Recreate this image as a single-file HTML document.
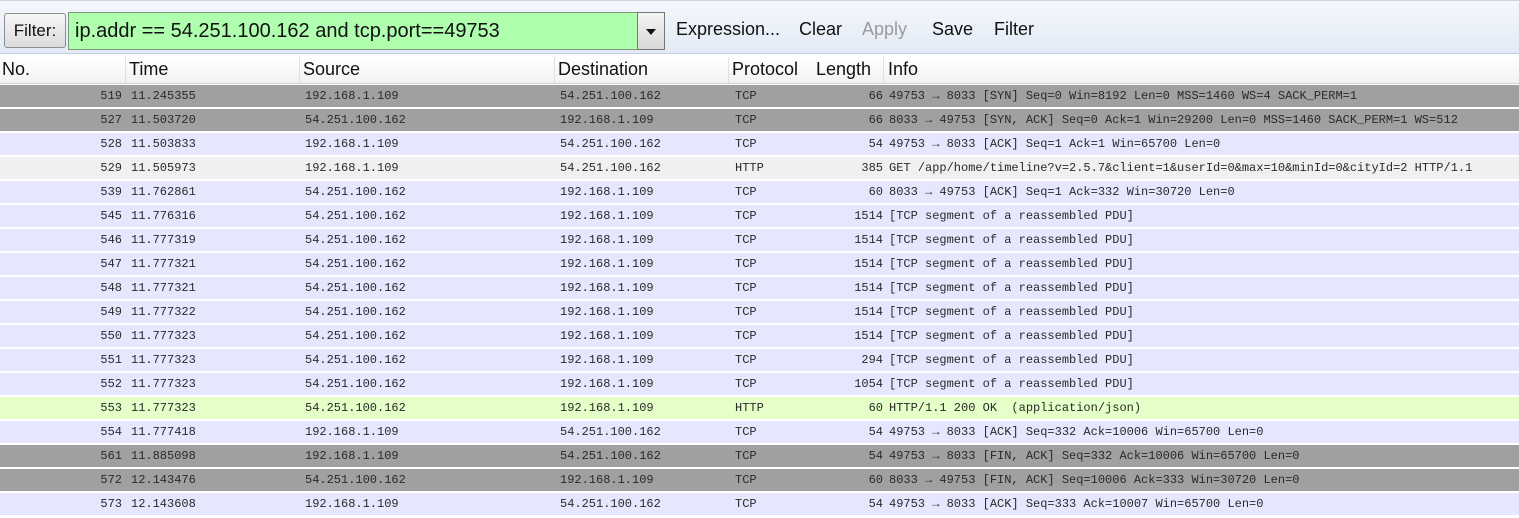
<!DOCTYPE html>
<html><head><meta charset="utf-8"><style>
body{margin:0;width:1519px;height:518px;overflow:hidden;background:#fff;font-family:"Liberation Sans",sans-serif;position:relative}
.tb{position:absolute;left:0;top:0;width:1519px;height:54px;background:linear-gradient(#f4f7fc,#e3eaf6);border-top:1px solid #c9d3e3;border-bottom:1px solid #c5cfdf;box-sizing:border-box}
.btn{position:absolute;left:4px;top:12px;width:62px;height:35px;border:1px solid #8e8f8f;border-radius:3px;background:linear-gradient(#f6f6f6,#dcdcdc);box-sizing:border-box;font-size:17px;line-height:33px;text-align:center;color:#111}
.inp{position:absolute;left:68px;top:11px;width:570px;height:38px;background:#afffaf;border:1px solid #7a9a7a;box-sizing:border-box;font-size:20px;line-height:36px;padding-left:6px;color:#111}
.dd{position:absolute;left:637px;top:11px;width:28px;height:38px;border:1px solid #777;background:linear-gradient(#f4f4f4,#d8d8d8);box-sizing:border-box}
.dd:after{content:"";position:absolute;left:8px;top:16px;border-left:5px solid transparent;border-right:5px solid transparent;border-top:6px solid #111}
.tl{position:absolute;top:18px;font-size:18px;color:#111}
.hd{position:absolute;left:0;top:57px;width:1519px;height:26px;background:linear-gradient(#fff,#f2f2f2);border-bottom:1px solid #d5d5d5}
.hd span{position:absolute;top:2px;font-size:18px;color:#111}
.hd i{position:absolute;top:0;width:1px;height:26px;background:#e0e0e0}
.r{position:absolute;left:0;width:1519px;height:22px;font-family:"Liberation Mono",monospace;font-size:12px;line-height:22px;color:#2a2a2a;white-space:pre}
.r span{position:absolute;top:0}
.g{background:#a0a0a0}.l{background:#e7e6ff}.w{background:#f0f0ee}.h{background:#e4ffc7}
</style></head><body>
<div class="tb">
<div class="btn">Filter:</div>
<div class="inp">ip.addr == 54.251.100.162 and tcp.port==49753</div>
<div class="dd"></div>
<span class="tl" style="left:676px">Expression...</span>
<span class="tl" style="left:799px">Clear</span>
<span class="tl" style="left:862px;color:#9a9a9a">Apply</span>
<span class="tl" style="left:932px">Save</span>
<span class="tl" style="left:994px">Filter</span>
</div>
<div class="hd">
<span style="left:2px">No.</span><i style="left:125px"></i>
<span style="left:129px">Time</span><i style="left:299px"></i>
<span style="left:303px">Source</span><i style="left:554px"></i>
<span style="left:558px">Destination</span><i style="left:728px"></i>
<span style="left:732px">Protocol</span>
<span style="left:816px">Length</span><i style="left:883px"></i>
<span style="left:888px">Info</span>
</div>
<div id="rows"></div>
<script>
var d=[
["g","519","11.245355","192.168.1.109","54.251.100.162","TCP","66","49753 → 8033 [SYN] Seq=0 Win=8192 Len=0 MSS=1460 WS=4 SACK_PERM=1"],
["g","527","11.503720","54.251.100.162","192.168.1.109","TCP","66","8033 → 49753 [SYN, ACK] Seq=0 Ack=1 Win=29200 Len=0 MSS=1460 SACK_PERM=1 WS=512"],
["l","528","11.503833","192.168.1.109","54.251.100.162","TCP","54","49753 → 8033 [ACK] Seq=1 Ack=1 Win=65700 Len=0"],
["w","529","11.505973","192.168.1.109","54.251.100.162","HTTP","385","GET /app/home/timeline?v=2.5.7&client=1&userId=0&max=10&minId=0&cityId=2 HTTP/1.1"],
["l","539","11.762861","54.251.100.162","192.168.1.109","TCP","60","8033 → 49753 [ACK] Seq=1 Ack=332 Win=30720 Len=0"],
["l","545","11.776316","54.251.100.162","192.168.1.109","TCP","1514","[TCP segment of a reassembled PDU]"],
["l","546","11.777319","54.251.100.162","192.168.1.109","TCP","1514","[TCP segment of a reassembled PDU]"],
["l","547","11.777321","54.251.100.162","192.168.1.109","TCP","1514","[TCP segment of a reassembled PDU]"],
["l","548","11.777321","54.251.100.162","192.168.1.109","TCP","1514","[TCP segment of a reassembled PDU]"],
["l","549","11.777322","54.251.100.162","192.168.1.109","TCP","1514","[TCP segment of a reassembled PDU]"],
["l","550","11.777323","54.251.100.162","192.168.1.109","TCP","1514","[TCP segment of a reassembled PDU]"],
["l","551","11.777323","54.251.100.162","192.168.1.109","TCP","294","[TCP segment of a reassembled PDU]"],
["l","552","11.777323","54.251.100.162","192.168.1.109","TCP","1054","[TCP segment of a reassembled PDU]"],
["h","553","11.777323","54.251.100.162","192.168.1.109","HTTP","60","HTTP/1.1 200 OK  (application/json)"],
["l","554","11.777418","192.168.1.109","54.251.100.162","TCP","54","49753 → 8033 [ACK] Seq=332 Ack=10006 Win=65700 Len=0"],
["g","561","11.885098","192.168.1.109","54.251.100.162","TCP","54","49753 → 8033 [FIN, ACK] Seq=332 Ack=10006 Win=65700 Len=0"],
["g","572","12.143476","54.251.100.162","192.168.1.109","TCP","60","8033 → 49753 [FIN, ACK] Seq=10006 Ack=333 Win=30720 Len=0"],
["l","573","12.143608","192.168.1.109","54.251.100.162","TCP","54","49753 → 8033 [ACK] Seq=333 Ack=10007 Win=65700 Len=0"]];
var h="";d.forEach(function(r,i){h+='<div class="r '+r[0]+'" style="top:'+(85+i*24)+'px"><span style="right:1397px">'+r[1]+'</span><span style="left:131px">'+r[2]+'</span><span style="left:305px">'+r[3]+'</span><span style="left:560px">'+r[4]+'</span><span style="left:735px">'+r[5]+'</span><span style="right:636px">'+r[6]+'</span><span style="left:889px">'+r[7].replace(/&/g,"&amp;")+'</span></div>';});
document.getElementById("rows").innerHTML=h;
</script>
</body></html>
